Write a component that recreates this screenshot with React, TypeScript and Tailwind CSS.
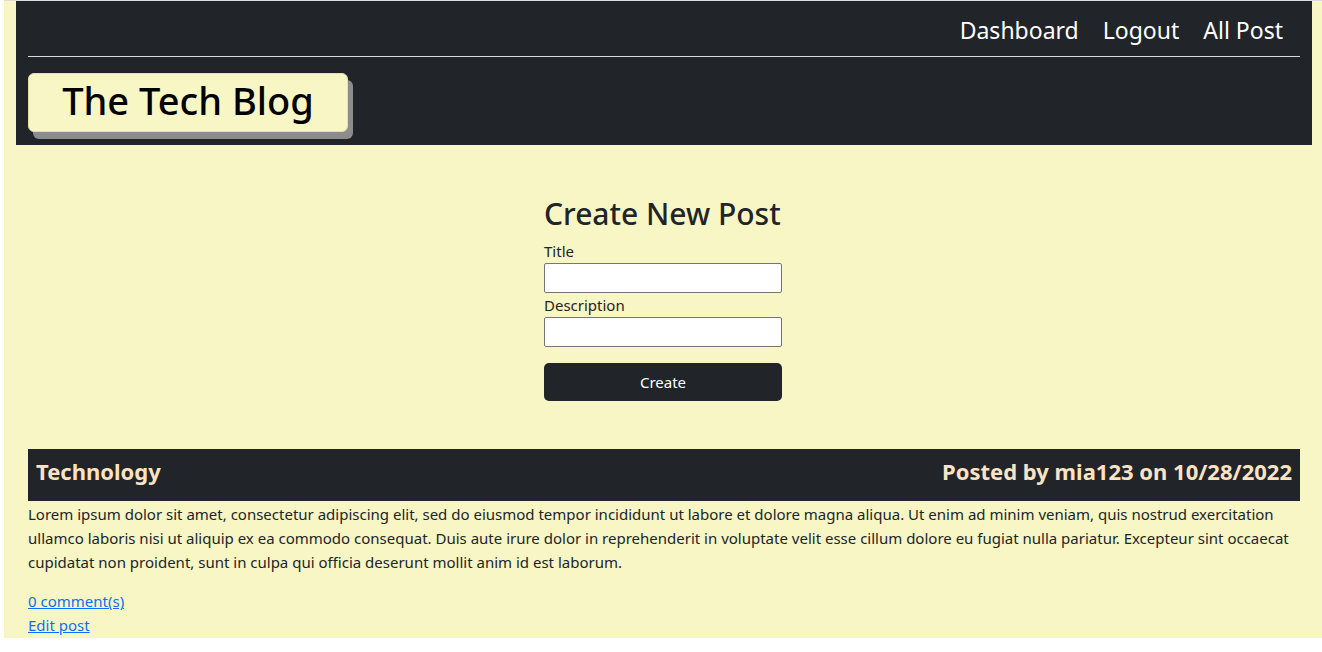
import React from "react";

export default function App() {
  return (
    <div className="w-[1322px] h-[652px] bg-white overflow-hidden" style={{ fontFamily: '"Noto Sans", "Open Sans", sans-serif' }}>
      <div className="ml-[4px] h-[638px] bg-[#f8f6c5] border-t border-[#dcdcdc]">
        <header className="ml-[12px] mr-[10px] bg-[#212529] px-[12px] pb-[13px]">
          <nav className="flex justify-end items-center h-[55px] pt-[4px] pr-[17px] gap-[24px] text-[23px] text-white">
            <a>Dashboard</a>
            <a>Logout</a>
            <a>All Post</a>
          </nav>
          <hr className="border-0 border-t border-[#d9d9d9]" />
          <div className="mt-[16px] w-[320px] h-[59px] pb-[6px] rounded-[6px] bg-[#f8f6c5] border border-[#e4e0a6] shadow-[5px_7px_0_#8c8c8c] flex items-center justify-center text-[38px] text-black font-medium leading-none">
            The Tech Blog
          </div>
        </header>
        <main className="pt-[50px]">
          <form className="w-[238px] mx-auto text-[#212529]">
            <h2 className="text-[30px] font-medium leading-[38px] whitespace-nowrap mb-[7px]">Create New Post</h2>
            <label className="block text-[15px] leading-[23px]">Title</label>
            <input className="block w-full h-[30px] bg-white border border-[#767676] rounded-[2px]" />
            <label className="block text-[15px] leading-[24px]">Description</label>
            <input className="block w-full h-[30px] bg-white border border-[#767676] rounded-[2px]" />
            <button type="button" className="mt-[16px] w-full h-[38px] rounded-[5px] bg-[#212529] text-white text-[15px]">Create</button>
          </form>
          <section className="mt-[48px] ml-[24px] mr-[22px]">
            <div className="h-[52px] bg-[#212529] flex items-center justify-between px-[8px] pb-[7px] text-[22px] font-bold text-[#fde3c3]">
              <span>Technology</span>
              <span>Posted by mia123 on 10/28/2022</span>
            </div>
            <p className="pt-[1px] text-[15px] leading-[24px] text-[#212529] mb-[15px]">
              Lorem ipsum dolor sit amet, consectetur adipiscing elit, sed do eiusmod tempor incididunt ut labore et dolore magna aliqua. Ut enim ad minim veniam, quis nostrud exercitation ullamco laboris nisi ut aliquip ex ea commodo consequat. Duis aute irure dolor in reprehenderit in voluptate velit esse cillum dolore eu fugiat nulla pariatur. Excepteur sint occaecat cupidatat non proident, sunt in culpa qui officia deserunt mollit anim id est laborum.
            </p>
            <div className="text-[15px] leading-[24px]">
              <a className="block w-fit text-[#0d6efd] underline">0 comment(s)</a>
              <a className="block w-fit text-[#0d6efd] underline">Edit post</a>
            </div>
          </section>
        </main>
      </div>
    </div>
  );
}
